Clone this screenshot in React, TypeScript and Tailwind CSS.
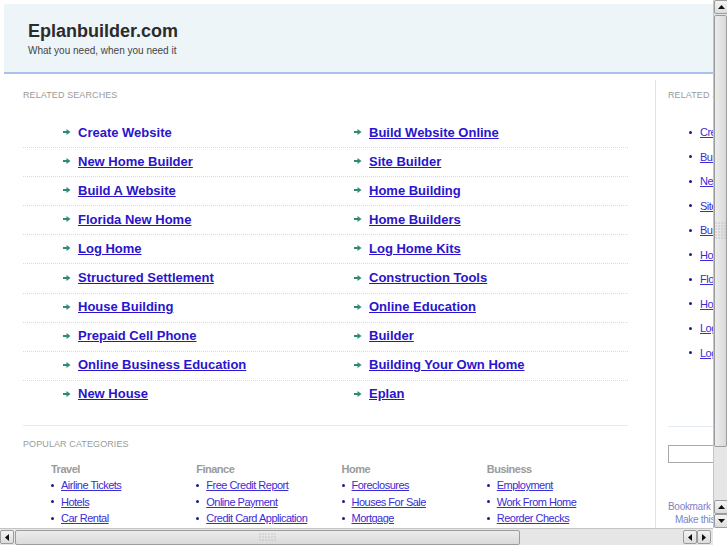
import React from 'react';

const col1 = [
  'Create Website',
  'New Home Builder',
  'Build A Website',
  'Florida New Home',
  'Log Home',
  'Structured Settlement',
  'House Building',
  'Prepaid Cell Phone',
  'Online Business Education',
  'New House',
];

const col2 = [
  'Build Website Online',
  'Site Builder',
  'Home Building',
  'Home Builders',
  'Log Home Kits',
  'Construction Tools',
  'Online Education',
  'Builder',
  'Building Your Own Home',
  'Eplan',
];

const sideLinks = [
  'Create Website',
  'Build Website Online',
  'New Home Builder',
  'Site Builder',
  'Build A Website',
  'Home Building',
  'Florida New Home',
  'Home Builders',
  'Log Home',
  'Log Home Kits',
];

const categories = [
  { title: 'Travel', links: ['Airline Tickets', 'Hotels', 'Car Rental'] },
  { title: 'Finance', links: ['Free Credit Report', 'Online Payment', 'Credit Card Application'] },
  { title: 'Home', links: ['Foreclosures', 'Houses For Sale', 'Mortgage'] },
  { title: 'Business', links: ['Employment', 'Work From Home', 'Reorder Checks'] },
];

const Arrow = () => (
  <svg width="8" height="6" viewBox="0 0 8 6" className="shrink-0 mr-[7px]">
    <rect x="0" y="2" width="4" height="2" fill="#2f8a78" />
    <polygon points="3.5,0 7.5,3 3.5,6" fill="#2f8a78" />
  </svg>
);

const Dot = () => <span className="inline-block w-[3px] h-[3px] rounded-full bg-[#1c1c8a] shrink-0" />;

// little triangle for scrollbar buttons
const Tri = ({ dir }: { dir: 'up' | 'down' | 'left' | 'right' }) => {
  const pts = {
    up: '0,4 3.5,0 7,4',
    down: '0,0 7,0 3.5,4',
    left: '4,0 4,7 0,3.5',
    right: '0,0 0,7 4,3.5',
  }[dir];
  const vertical = dir === 'up' || dir === 'down';
  return (
    <svg width={vertical ? 7 : 4} height={vertical ? 4 : 7} viewBox={vertical ? '0 0 7 4' : '0 0 4 7'}>
      <polygon points={pts} fill="#111" />
    </svg>
  );
};

const SbButton = ({ dir }: { dir: 'up' | 'down' | 'left' | 'right' }) => (
  <div className="w-[14px] h-[14px] shrink-0 flex items-center justify-center rounded-[2px] border border-[#9c9c9c] bg-gradient-to-b from-[#f4f4f4] to-[#dcdcdc]">
    <Tri dir={dir} />
  </div>
);

const Grip = ({ vertical }: { vertical?: boolean }) => (
  <svg width={vertical ? 12 : 18} height={vertical ? 18 : 9} className="opacity-70">
    {Array.from({ length: vertical ? 6 : 4 }).map((_, r) =>
      Array.from({ length: vertical ? 4 : 6 }).map((_, c) => (
        <rect key={`${r}-${c}`} x={c * 3 + 0.5} y={r * 3 + 0.5} width="1" height="1" fill="#8a8a8a" />
      ))
    )}
  </svg>
);

export default function App() {
  return (
    <div className="w-[727px] h-[545px] flex flex-col overflow-hidden bg-white font-['Liberation_Sans',Arial,sans-serif]">
      <div className="flex flex-1 min-h-0">
        {/* page */}
        <div className="flex-1 min-w-0 overflow-hidden">
          <div className="w-[900px] pt-[4px] pl-[4px]">
            {/* header */}
            <div className="h-[70px] bg-[#eef5f9] border-b-2 border-[#a9c2ea] pl-[24px] pt-[17px]">
              <div className="text-[18px] leading-[21px] font-bold text-[#2b2b2b]">Eplanbuilder.com</div>
              <div className="mt-[3px] text-[10px] leading-[12px] text-[#444]">What you need, when you need it</div>
            </div>

            <div className="flex mt-[6px]">
              {/* main column */}
              <div className="w-[651px] shrink-0 pl-[19px] pr-[27px] pt-[10px]">
                <div className="text-[9px] leading-[11px] tracking-[0.1px] text-[#9a9a9a]">RELATED SEARCHES</div>

                <div className="mt-[18px]">
                  {col1.map((a, i) => (
                    <div
                      key={a}
                      className={`h-[29.1px] pb-[2px] flex items-center border-b border-dotted ${
                        i === col1.length - 1 ? 'border-transparent' : 'border-[#cddcf0]'
                      }`}
                    >
                      <div className="w-[331px] shrink-0 pl-[40px] flex items-center">
                        <Arrow />
                        <a className={`text-[13px] leading-[15px] font-bold text-[#2a14cc] ${i === 0 ? '' : 'underline'}`}>{a}</a>
                      </div>
                      <div className="flex items-center">
                        <Arrow />
                        <a className="text-[13px] leading-[15px] font-bold text-[#2a14cc] underline">{col2[i]}</a>
                      </div>
                    </div>
                  ))}
                </div>

                <div className="mt-[15px] border-t border-[#e2eaf5]" />

                <div className="mt-[13px] text-[9px] leading-[11px] tracking-[0.1px] text-[#9a9a9a]">POPULAR CATEGORIES</div>

                <div className="mt-[11px] pl-[28px] grid grid-cols-4 w-[609px]">
                  {categories.map((c) => (
                    <div key={c.title} className="leading-[16.4px]">
                      <div className="text-[11px] font-bold tracking-[-0.5px] text-[#9a9a9a]">{c.title}</div>
                      {c.links.map((l) => (
                        <div key={l} className="flex items-center">
                          <Dot />
                          <a className="ml-[7px] text-[11px] tracking-[-0.5px] text-[#3b2cd6] underline">{l}</a>
                        </div>
                      ))}
                    </div>
                  ))}
                </div>
              </div>

              {/* sidebar */}
              <div className="w-[240px] shrink-0 border-l border-[#dbe4f2] pl-[12px] pt-[10px] h-[460px]">
                <div className="text-[9px] leading-[11px] tracking-[0.1px] text-[#9a9a9a]">RELATED SEARCHES</div>
                <div className="mt-[19px] pl-[21px]">
                  {sideLinks.map((l) => (
                    <div key={l} className="h-[24.5px] flex items-center">
                      <Dot />
                      <a className="ml-[8px] text-[11px] tracking-[-0.5px] text-[#3b2cd6] underline">{l}</a>
                    </div>
                  ))}
                </div>
                <div className="mt-[61px] border-t border-[#e2eaf5]" />
                <div className="mt-[18px] h-[18px] w-[160px] border border-[#a8a8a8] bg-white" />
                <div className="mt-[38px] text-[10px] leading-[12.5px] tracking-[-0.3px] text-[#7f7fc8]">
                  <div>Bookmark this page</div>
                  <div className="pl-[7px]">Make this your homepage</div>
                </div>
              </div>
            </div>
          </div>
        </div>

        {/* vertical scrollbar */}
        <div className="w-[14px] shrink-0 flex flex-col bg-[#e6e6e6] border-l border-[#c4c4c4]">
          <SbButton dir="up" />
          <div className="mt-[1px] h-[432px] rounded-[2px] border border-[#9c9c9c] bg-gradient-to-r from-[#ececec] to-[#dadada] flex items-center justify-center">
            <Grip vertical />
          </div>
          <div className="flex-1" />
          <SbButton dir="up" />
          <SbButton dir="down" />
        </div>
      </div>

      {/* horizontal scrollbar */}
      <div className="h-[17px] shrink-0 flex bg-white">
        <div className="w-[713px] flex items-center bg-[#e6e6e6] border-t border-[#c4c4c4] pr-[2px]">
          <SbButton dir="left" />
          <div className="ml-[1px] w-[505px] h-[15px] rounded-[2px] border border-[#9c9c9c] bg-gradient-to-b from-[#ececec] to-[#dadada] flex items-center justify-center">
            <Grip />
          </div>
          <div className="flex-1" />
          <SbButton dir="left" />
          <SbButton dir="right" />
        </div>
        <div className="flex-1 bg-white" />
      </div>
    </div>
  );
}
